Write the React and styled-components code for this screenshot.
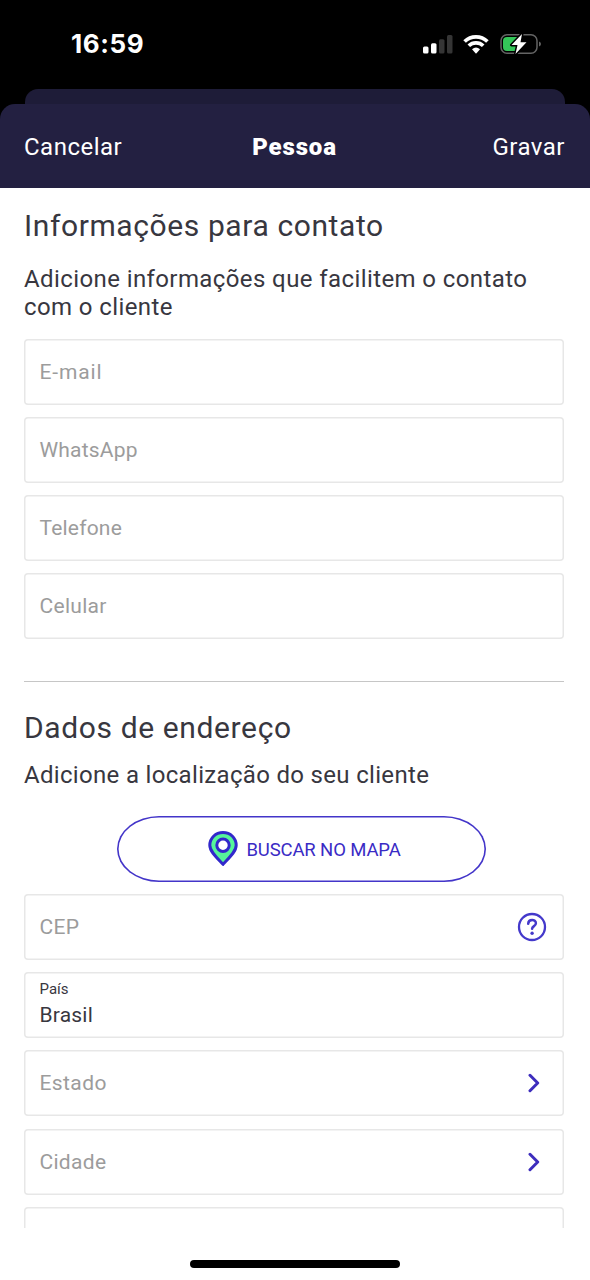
import React from "react";
import styled, { createGlobalStyle } from "styled-components";

const GlobalStyle = createGlobalStyle`
  *, *::before, *::after { box-sizing: border-box; }
  body { margin: 0; background: #fff; }
`;

const Screen = styled.div`
  display: flex;
  flex-direction: column;
  width: 590px;
  height: 1280px;
  overflow: hidden;
  background: #fff;
  color: #38373f;
  font-family: Roboto, "Liberation Sans", sans-serif;
`;

const Backdrop = styled.div`
  background: #000;
`;

const StatusBar = styled.div`
  display: flex;
  align-items: center;
  justify-content: space-between;
  height: 89px;
  padding: 0 48.5px 1px 71px;
`;

const Clock = styled.span`
  font: 700 26px/30px Inter, sans-serif;
  letter-spacing: 0.6px;
  color: #fff;
`;

const StatusIcons = styled.div`
  display: flex;
  align-items: center;
  gap: 10.5px;
`;

const PreviousSheet = styled.div`
  height: 15px;
  margin: 0 25px;
  border-radius: 13px 13px 0 0;
  background: #1e1c38;
`;

const Header = styled.header`
  display: grid;
  grid-template-columns: 1fr auto 1fr;
  align-items: center;
  height: 84px;
  padding: 2px 25px 0 24px;
  border-radius: 15px 15px 0 0;
  background: #232041;
  color: #fff;
`;

const Action = styled.button`
  justify-self: ${(p) => p.$side};
  padding: 0;
  border: 0;
  background: none;
  color: inherit;
  font: 400 24px/30px Roboto, sans-serif;
  letter-spacing: ${(p) => p.$track}px;
`;

const Title = styled.h1`
  margin: 0;
  font-size: 24px;
  line-height: 30px;
  font-weight: 900;
  letter-spacing: 0.85px;
`;

const Content = styled.main`
  flex: none;
  height: 1040px;
  padding: 0 26px 0 24px;
  overflow: hidden;
`;

const Section = styled.section`
  display: flex;
  flex-direction: column;
  padding-top: ${(p) => p.$top}px;
`;

const Heading = styled.h2`
  margin: 0;
  font-size: 30px;
  line-height: 36px;
  font-weight: 400;
  letter-spacing: ${(p) => p.$track}px;
`;

const Lead = styled.p`
  margin: ${(p) => p.$top}px 0 18px;
  font-size: 24px;
  line-height: 28px;
  letter-spacing: ${(p) => p.$track}px;
  white-space: nowrap;
`;

const Fields = styled.div`
  display: flex;
  flex-direction: column;
  gap: 12.1px;
`;

const Field = styled.div`
  display: flex;
  align-items: center;
  justify-content: space-between;
  height: 66px;
  padding: 0 ${(p) => p.$end || 17}px 0 15.5px;
  border-radius: 4px;
  box-shadow: inset 0 0 0 1.5px #e7e7e7;
`;

const Placeholder = styled.span`
  font-size: 21px;
  line-height: 26px;
  letter-spacing: ${(p) => p.$track}px;
  color: #9c9c9c;
`;

const Filled = styled.div`
  display: flex;
  flex-direction: column;
  gap: 3px;
  padding-bottom: 3px;
`;

const FieldLabel = styled.span`
  font-size: 15px;
  line-height: 20px;
  letter-spacing: 0;
`;

const FieldValue = styled.span`
  font-size: 21px;
  line-height: 26px;
  letter-spacing: 0.2px;
`;

const Divider = styled.hr`
  width: 100%;
  height: 1px;
  margin: 42px 0 0;
  border: 0;
  background: #c6c6c6;
`;

const MapButton = styled.button`
  display: flex;
  align-items: center;
  justify-content: center;
  gap: 8px;
  width: 369px;
  height: 66px;
  margin: 9px 0 12.5px 92.5px;
  padding: 0 0 0 7px;
  border: 0;
  border-radius: 42px / 33px;
  box-shadow: inset 0 0 0 1.6px #4335c9;
  background: #fff;
  color: #3a2bc5;
  font: 400 18.5px/24px Roboto, sans-serif;
  letter-spacing: -0.13px;
`;

const ButtonText = styled.span`
  padding-top: 2px;
`;

const HomeArea = styled.footer`
  display: flex;
  justify-content: center;
  padding-top: 32px;
`;

const HomeIndicator = styled.div`
  width: 210px;
  height: 8px;
  border-radius: 4px;
  background: #000;
`;

const SignalIcon = () => (
  <svg width="30" height="20" viewBox="0 0 30 20">
    <rect x="0" y="12.5" width="5.5" height="7" rx="1.5" fill="#fff" />
    <rect x="8" y="9.3" width="5.5" height="10.2" rx="1.5" fill="#fff" />
    <rect x="16" y="5.3" width="5.5" height="14.2" rx="1.5" fill="#353535" />
    <rect x="24" y="1" width="5.5" height="18.5" rx="1.5" fill="#353535" />
  </svg>
);

const WifiIcon = () => (
  <svg width="26" height="20" viewBox="0 0 26 20">
    <g fill="none" stroke="#fff" strokeWidth="3.7">
      <path d="M1.6 7.5C8 1.2 18 1.2 24.4 7.5" />
      <path d="M5.8 11.8C9.8 7.9 16.2 7.9 20.2 11.8" />
    </g>
    <path d="M9 15.2Q13 12 17 15.2L13.5 19.2Q13 19.7 12.5 19.2Z" fill="#fff" />
  </svg>
);

const BatteryIcon = () => (
  <svg width="42" height="22" viewBox="0 0 42 22">
    <rect x="1" y="1.8" width="36" height="18.4" rx="6" fill="none" stroke="#646464" strokeWidth="1.5" />
    <path d="M39 8.5Q41 9.2 41 11T39 13.5Z" fill="#646464" />
    <path d="M7 4H17V18H7Q3 18 3 14V8Q3 4 7 4Z" fill="#34c759" />
    <path d="M22 1L11.5 12H17.5L15.5 21L26.5 9.3H20.5Z" fill="#fff" stroke="#000" strokeWidth="3" paintOrder="stroke" strokeLinejoin="round" />
  </svg>
);

const PinIcon = () => (
  <svg width="30" height="36" viewBox="0 0 30 36">
    <path d="M15 1.5C7.5 1.5 1.8 7.2 1.8 14.3C1.8 20.5 8.5 26.5 15 33.3C21.5 26.5 28.2 20.5 28.2 14.3C28.2 7.2 22.5 1.5 15 1.5Z" fill="#56f59a" stroke="#3228cb" strokeWidth="3" strokeLinejoin="round" />
    <circle cx="15" cy="14.2" r="6.2" fill="#fff" stroke="#3228cb" strokeWidth="3" />
  </svg>
);

const HelpIcon = () => (
  <svg width="30" height="30" viewBox="0 0 30 30" fill="none" stroke="#4439cb">
    <circle cx="15" cy="15" r="13" strokeWidth="2.3" />
    <path d="M11.2 11.7C11.4 6.8 18.9 6.9 18.9 11.2C18.9 14.2 15.1 14 15.1 16.8" strokeWidth="2.5" strokeLinecap="round" />
    <circle cx="15.1" cy="21.2" r="1.7" fill="#4439cb" stroke="none" />
  </svg>
);

const ChevronIcon = () => (
  <svg width="12" height="20" viewBox="0 0 12 20">
    <path d="M2 2.3L9.7 10L2 17.7" fill="none" stroke="#3d2dbd" strokeWidth="3" strokeLinecap="round" strokeLinejoin="round" />
  </svg>
);

const contactFields = [
  { label: "E-mail", track: 0.85 },
  { label: "WhatsApp", track: 0.2 },
  { label: "Telefone", track: 0.2 },
  { label: "Celular", track: 0.3 },
];

export default function App() {
  return (
    <Screen>
      <GlobalStyle />
      <Backdrop>
        <StatusBar>
          <Clock>16:59</Clock>
          <StatusIcons>
            <SignalIcon />
            <WifiIcon />
            <BatteryIcon />
          </StatusIcons>
        </StatusBar>
        <PreviousSheet />
        <Header>
          <Action $side="start" $track={0.5}>Cancelar</Action>
          <Title>Pessoa</Title>
          <Action $side="end" $track={0.5}>Gravar</Action>
        </Header>
      </Backdrop>
      <Content>
        <Section $top={20}>
          <Heading $track={0.6}>Informações para contato</Heading>
          <Lead $top={20.5} $track={0.4}>
            Adicione informações que facilitem o contato
            <br />
            com o cliente
          </Lead>
          <Fields>
            {contactFields.map((f) => (
              <Field key={f.label}>
                <Placeholder $track={f.track}>{f.label}</Placeholder>
              </Field>
            ))}
          </Fields>
          <Divider />
        </Section>
        <Section $top={28}>
          <Heading $track={0.62}>Dados de endereço</Heading>
          <Lead $top={15} $track={0.32}>Adicione a localização do seu cliente</Lead>
          <MapButton>
            <PinIcon />
            <ButtonText>BUSCAR NO MAPA</ButtonText>
          </MapButton>
          <Fields>
            <Field>
              <Placeholder $track={0.3}>CEP</Placeholder>
              <HelpIcon />
            </Field>
            <Field>
              <Filled>
                <FieldLabel>País</FieldLabel>
                <FieldValue>Brasil</FieldValue>
              </Filled>
            </Field>
            <Field $end={24}>
              <Placeholder $track={0.4}>Estado</Placeholder>
              <ChevronIcon />
            </Field>
            <Field $end={24}>
              <Placeholder $track={0.3}>Cidade</Placeholder>
              <ChevronIcon />
            </Field>
            <Field />
          </Fields>
        </Section>
      </Content>
      <HomeArea>
        <HomeIndicator />
      </HomeArea>
    </Screen>
  );
}
